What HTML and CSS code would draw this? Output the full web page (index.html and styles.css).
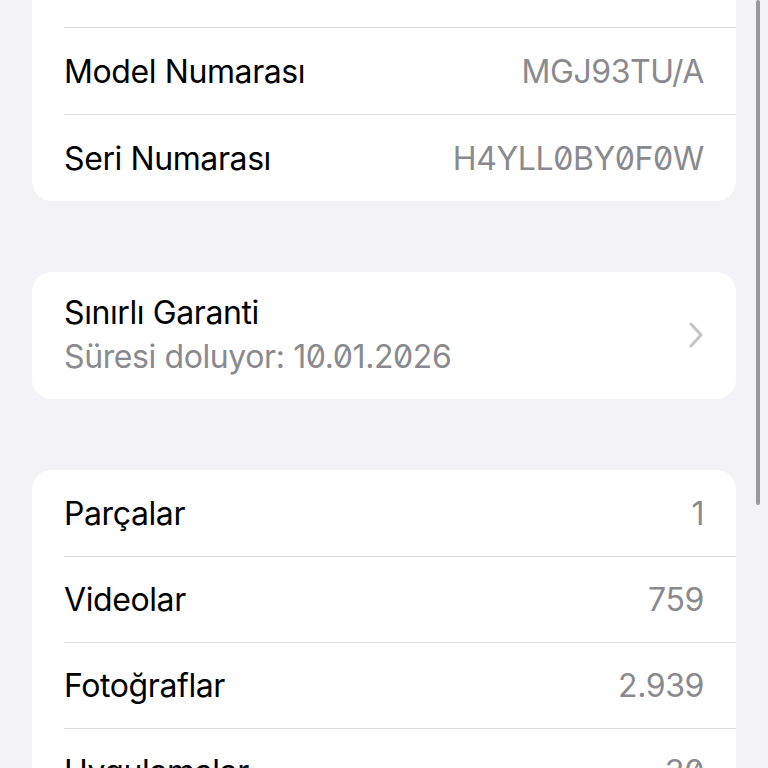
FILE: index.html
```html
<!DOCTYPE html>
<html lang="tr">
<head>
  <meta charset="UTF-8" />
  <title>Hakkında</title>
  <link rel="stylesheet" href="styles.css">
</head>
<body>

  <div class="screen">
    <div class="content">

      <section class="group">
        <div class="row">
          <span class="label">Model Adı</span>
          <span class="value">iPhone 12</span>
        </div>
        <div class="row">
          <span class="label">Model Numarası</span>
          <span class="value">MGJ93TU/A</span>
        </div>
        <div class="row">
          <span class="label">Seri Numarası</span>
          <span class="value">H4YLL0BY0F0W</span>
        </div>
      </section>

      <section class="group">
        <div class="row row-link">
          <div class="stack">
            <span class="label">Sınırlı Garanti</span>
            <span class="value">Süresi doluyor: 10.01.2026</span>
          </div>
          <svg class="chevron" width="14" height="26" viewBox="0 0 14 26">
            <path d="M2 2 L12 13 L2 24" fill="none" stroke="#c4c4c7" stroke-width="3" stroke-linecap="round" stroke-linejoin="round"/>
          </svg>
        </div>
      </section>

      <section class="group group-tight">
        <div class="row">
          <span class="label">Parçalar</span>
          <span class="value">1</span>
        </div>
        <div class="row">
          <span class="label">Videolar</span>
          <span class="value">759</span>
        </div>
        <div class="row">
          <span class="label">Fotoğraflar</span>
          <span class="value">2.939</span>
        </div>
        <div class="row">
          <span class="label">Uygulamalar</span>
          <span class="value">30</span>
        </div>
      </section>

    </div>

    <!-- scroll indicator -->
    <div class="scroll-thumb"></div>
  </div>

</body>
</html>
```

FILE: styles.css
```css
html, body {
  margin: 0;
  height: 100%;
  overflow: hidden;
}

body {
  font-family: 'Inter', 'Noto Sans', sans-serif;
  background-color: #f2f2f7;
  color: #000;
}

.screen {
  position: relative;
  height: 768px;
  overflow: hidden;
}

/* page is scrolled: first row sits above the window */
.content {
  display: flex;
  flex-direction: column;
  gap: 71px;
  margin-top: -59px;
  padding: 0 32px;
}

.group {
  background-color: #fff;
  border-radius: 20px;
  overflow: hidden;
}

.row {
  display: flex;
  align-items: center;
  justify-content: space-between;
  height: 86px;
  margin-left: 32px;
  padding-right: 32px;
  font-size: 32px;
  letter-spacing: -0.4px;
}

.row + .row {
  border-top: 1px solid #dcdce0;
}

.group-tight .row + .row {
  height: 85px;
}

.row-link {
  height: auto;
  padding-top: 19px;
  padding-bottom: 20px;
}

.stack {
  display: flex;
  flex-direction: column;
  line-height: 44px;
}

.label {
  color: #000;
}

.value {
  color: #8a8a8e;
  font-feature-settings: "zero" 1;
}

.chevron {
  margin-right: 1px;
}

.scroll-thumb {
  position: absolute;
  top: 0;
  right: 8px;
  width: 4px;
  height: 505px;
  border-radius: 2px;
  background-color: #98989d;
}
```
